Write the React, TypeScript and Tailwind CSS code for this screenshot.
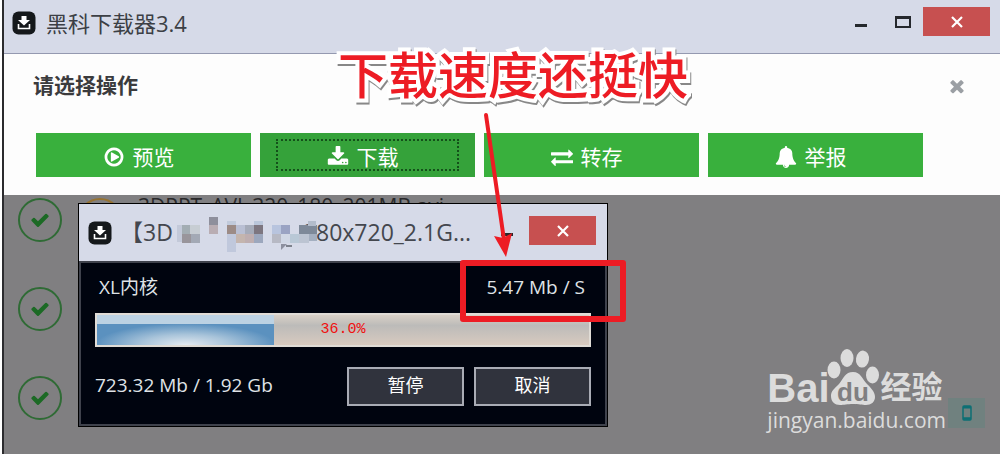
import React from 'react';

const ICONS = {
  play: 'M1312 896q0 37-32 55l-544 320q-15 9-32 9-16 0-32-8-32-19-32-56v-640q0-37 32-56 33-18 64 1l544 320q32 18 32 55zm128 0q0-148-73-273t-198-198-273-73-273 73-198 198-73 273 73 273 198 198 273 73 273-73 198-198 73-273zm224 0q0 209-103 385.5t-279.5 279.5-385.5 103-385.5-103-279.5-279.5-103-385.5 103-385.5 279.5-279.5 385.5-103 385.5 103 279.5 279.5 103 385.5z',
  download: 'M1344 1344q0-26-19-45t-45-19-45 19-19 45 19 45 45 19 45-19 19-45zm256 0q0-26-19-45t-45-19-45 19-19 45 19 45 45 19 45-19 19-45zm128-224v320q0 40-28 68t-68 28h-1472q-40 0-68-28t-28-68v-320q0-40 28-68t68-28h465l135 136q58 56 136 56t136-56l136-136h464q40 0 68 28t28 68zm-325-569q17 41-14 70l-448 448q-18 19-45 19t-45-19l-448-448q-31-29-14-70 17-39 59-39h256v-448q0-26 19-45t45-19h256q26 0 45 19t19 45v448h256q42 0 59 39z',
  exchange: 'M1792 1184v192q0 13-9.5 22.5t-22.5 9.5h-1376v192q0 13-9.5 22.5t-22.5 9.5q-12 0-24-10l-319-320q-9-9-9-22 0-14 9-23l320-320q9-9 23-9 13 0 22.5 9.5t9.5 22.5v192h1376q13 0 22.5 9.5t9.5 22.5zm0-544q0 14-9 23l-320 320q-9 9-23 9-13 0-22.5-9.5t-9.5-22.5v-192h-1376q-13 0-22.5-9.5t-9.5-22.5v-192q0-13 9.5-22.5t22.5-9.5h1376v-192q0-14 9-23t23-9q12 0 24 10l319 319q9 9 9 23z',
  bell: 'M912 1696q0-16-16-16-59 0-101.5-42.5t-42.5-101.5q0-16-16-16t-16 16q0 73 51.5 124.5t124.5 51.5q16 0 16-16zm816-288q0 52-38 90t-90 38h-448q0 106-75 181t-181 75-181-75-75-181h-448q-52 0-90-38t-38-90q50-42 91-88t85-119.5 74.5-158.5 50-206 19.5-260q0-152 117-282.5t307-158.5q-8-19-8-39 0-40 28-68t68-28 68 28 28 68q0 20-8 39 190 28 307 158.5t117 282.5q0 139 19.5 260t50 206 74.5 158.5 85 119.5 91 88z',
  times: 'M1490 1322q0 40-28 68l-136 136q-28 28-68 28t-68-28l-294-294-294 294q-28 28-68 28t-68-28l-136-136q-28-28-28-68t28-68l294-294-294-294q-28-28-28-68t28-68l136-136q28-28 68-28t68 28l294 294 294-294q28-28 68-28t68 28l136 136q28 28 28 68t-28 68l-294 294 294 294q28 28 28 68z',
  check: 'M1671 566q0 40-28 68l-724 724-136 136q-28 28-68 28t-68-28l-136-136-362-362q-28-28-28-68t28-68l136-136q28-28 68-28t68 28l294 295 656-657q28-28 68-28t68 28l136 136q28 28 28 68z',
};

const Icon = ({ name, className }: { name: keyof typeof ICONS; className: string }) => (
  <svg viewBox="0 0 1792 1792" fill="currentColor" className={className} aria-hidden="true">
    <path d={ICONS[name]} />
  </svg>
);

const AppIcon = () => (
  <svg viewBox="0 0 24 24" className="size-6 shrink-0" aria-hidden="true">
    <rect x="0.5" y="0.5" width="23" height="23" rx="6" fill="#15181b" />
    <path d="M9.5 5h5v4h3.500L12 14.500 6 9h3.500z" fill="#fff" />
    <path d="M6.500 13v4.500h11V13" fill="none" stroke="#fff" strokeWidth="1.6" />
  </svg>
);

const CloseButton = () => (
  <button type="button" aria-label="关闭" className="flex h-[29px] w-[67px] items-center justify-center bg-[#c75050]">
    <svg viewBox="0 0 12 12" className="size-3">
      <path d="M1 1l10 10M11 1L1 11" stroke="#fff" strokeWidth="2.2" />
    </svg>
  </button>
);

// Pixelated part of the file name: x, y, w, h, color
const MOSAIC: [number, number, number, number, string][] = [
  [0, 14, 6, 17, '#c3c9d9'],
  [5, 14, 8, 9, '#a3adb3'],
  [13, 14, 10, 9, '#c7cdd3'],
  [5, 23, 9, 9, '#99959b'],
  [14, 23, 9, 9, '#a3a9b5'],
  [32, 6, 9, 9, '#8e8f9c'],
  [32, 14, 9, 9, '#b9adb3'],
  [50, 10, 9, 5, '#c1cadb'],
  [50, 14, 9, 9, '#9c8b86'],
  [59, 14, 9, 9, '#b9bfd3'],
  [68, 14, 9, 9, '#a5abb9'],
  [77, 10, 9, 5, '#bac6da'],
  [77, 14, 9, 9, '#7d7680'],
  [50, 23, 9, 18, '#c0c8dc'],
  [59, 23, 9, 9, '#c4b5ae'],
  [68, 23, 9, 9, '#beaeb0'],
  [77, 23, 9, 9, '#9ca7bd'],
  [95, 14, 9, 9, '#b8c4de'],
  [104, 14, 9, 9, '#9aa3c3'],
  [95, 23, 9, 9, '#b7b9c4'],
  [104, 23, 9, 9, '#d0d7e5'],
  [113, 23, 9, 9, '#b9c8d6'],
  [122, 14, 18, 9, '#7e8999'],
  [122, 23, 10, 9, '#bcc4d2'],
  [132, 23, 8, 7, '#a4afc0'],
  [131, 10, 8, 5, '#b3bccb'],
];

const actions = [
  { label: '预览', icon: 'play', focused: false },
  { label: '下载', icon: 'download', focused: true },
  { label: '转存', icon: 'exchange', focused: false },
  { label: '举报', icon: 'bell', focused: false },
] as const;

const files = ['3DPPT_AVI_320_180_201MB.avi', '', ''];

const DownloadDialog = ({ percent }: { percent: number }) => (
  <section className="absolute left-[78px] top-[203px] w-[530px] border border-black bg-[#00040f] text-[#dfe2e6]">
    <div className="flex h-[57px] items-center bg-[#d6dae8] pl-[9px] pr-[11px] text-[#44474e]">
      <AppIcon />
      <h2 className="ml-2 flex flex-1 items-center whitespace-nowrap text-[23px] leading-none">
        <span>【3D</span>
        <svg viewBox="0 0 140 44" className="relative -mr-[14px] ml-1 h-11 w-[140px] shrink-0" aria-hidden="true">
          {MOSAIC.map(([x, y, w, h, color]) => (
            <rect key={`${x}-${y}`} x={x} y={y} width={w} height={h} fill={color} />
          ))}
          <path d="M104 33l6 0-6 6z" fill="#8d909f" />
          <path d="M109 35h6" stroke="#61656f" strokeWidth="1.5" />
        </svg>
        <span>280x720_2.1G...</span>
      </h2>
      <button type="button" aria-label="最小化" className="mr-4 flex h-6 w-3 items-center">
        <span className="mt-1 h-[3px] w-3 bg-[#25282d]" />
      </button>
      <div className="mb-1">
        <CloseButton />
      </div>
    </div>

    <div className="border-2 border-[#3f424c] px-[14px] pb-[18px] pt-[10px] text-[19px]">
      <div className="flex items-center justify-between pl-1 pr-[6px] leading-7">
        <span>XL内核</span>
        <span>5.47 Mb / S</span>
      </div>
      <div
        role="progressbar"
        aria-label="下载进度"
        aria-valuenow={percent}
        className="relative mt-3 h-[34px] border-2 border-[#e0dcd6] bg-linear-to-b from-[#d9d0c6] via-[#bcbbb9] via-35% to-[#d8cabf]"
      >
        <div
          className="h-full border-t-[9px] border-[#bcd2e3] bg-[radial-gradient(ellipse_at_bottom,#e4eaf0_0%,#a9c4da_35%,#5b91bf_72%)]"
          style={{ width: `${percent}%` }}
        />
        <span className="absolute inset-0 flex items-center justify-center font-['Liberation_Mono',monospace] text-[15px] text-[#f01010]">
          {percent.toFixed(1)}%
        </span>
      </div>
      <div className="mt-5 flex items-center gap-[10px]">
        <span className="flex-1 pb-1 leading-8">723.32 Mb / 1.92 Gb</span>
        {['暂停', '取消'].map((label) => (
          <button key={label} type="button" className="h-[39px] w-[117px] border-2 border-[#a9acb5] bg-[#30333d] pb-[3px] text-[18px] leading-none text-white">
            {label}
          </button>
        ))}
      </div>
    </div>
  </section>
);

const Watermark = () => (
  <div className="absolute bottom-[20px] right-[54px] text-[#dcdcdc]">
    <div className="flex items-end">
      <span className="font-['Liberation_Sans',sans-serif] text-[40px] font-bold leading-9">Bai</span>
      <svg viewBox="0 0 52 58" className="-ml-[3px] mr-[2px] h-[58px] w-[52px]" aria-hidden="true">
        <g fill="currentColor">
          <ellipse cx="7" cy="22" rx="6.5" ry="8.5" />
          <ellipse cx="20" cy="10" rx="6.5" ry="9" />
          <ellipse cx="35.5" cy="11" rx="6.5" ry="8.5" transform="rotate(8 35 11)" />
          <ellipse cx="45.5" cy="27" rx="6.5" ry="8.5" />
          <path d="M26 24c8 0 9 7 14 12 6 6 8 9 8 13 0 5-4 8-9 8-4 0-7-1-13-1s-9 1-13 1c-5 0-9-3-9-9 0-5 3-7 8-12 5-6 6-12 14-12z" />
        </g>
        <text x="10" y="53" fill="#807f81" fontSize="26" fontWeight="700" fontFamily="Liberation Sans, sans-serif">
          du
        </text>
      </svg>
      <span className="text-[31px] font-bold leading-10">经验</span>
    </div>
    <a href="#" className="block text-[21px] leading-7">
      jingyan.baidu.com
    </a>
  </div>
);

const App: React.FC = () => {
  return (
    <div className="relative flex min-h-screen flex-col overflow-hidden bg-white pl-[2px] font-['Open_Sans','Noto_Sans_CJK_SC',sans-serif]">
      <div className="flex flex-1 flex-col border-l-2 border-[#2b2b2e]">
        {/* Title bar */}
        <header className="flex h-[54px] items-start border-b border-[#9499b0] bg-[#d6dae8] pl-2 pr-[10px] pt-[7px] text-[#3c3f45]">
          <div className="flex h-8 flex-1 items-center gap-[10px]">
            <AppIcon />
            <h1 className="text-[22px] leading-none">黑科下载器3.4</h1>
          </div>
          <button type="button" aria-label="最小化" className="mr-7 flex h-8 w-3 items-center">
            <span className="mt-1 h-[3px] w-3 bg-[#25282d]" />
          </button>
          <button type="button" aria-label="最大化" className="mr-3 flex h-[30px] items-center">
            <span className="h-3 w-4 border-2 border-t-[3px] border-[#25282d]" />
          </button>
          <CloseButton />
        </header>

        {/* Actions */}
        <section className="bg-[#fdfdfd] pb-[18px] pl-8 pr-[77px]">
          <div className="-ml-[3px] -mr-11 flex h-[79px] items-center justify-between pb-4">
            <h2 className="text-[21px] font-bold leading-none text-[#3b3b3d]">请选择操作</h2>
            <button type="button" aria-label="取消操作">
              <Icon name="times" className="size-5 text-[#9b9fa4]" />
            </button>
          </div>
          <div className="grid grid-cols-4 gap-[9px]">
            {actions.map((action) => (
              <button
                key={action.label}
                type="button"
                className={`flex h-11 px-4 py-[6px] text-[21px] leading-none text-white ${action.focused ? 'bg-[#35a23a]' : 'bg-[#39b03d]'}`}
              >
                <span
                  className={`flex h-full flex-1 items-center justify-center gap-2 border-2 pr-[10px] pt-1 ${
                    action.focused ? 'border-dotted border-[#14501a]' : 'border-transparent'
                  }`}
                >
                  <Icon name={action.icon} className="size-[22px]" />
                  {action.label}
                </span>
              </button>
            ))}
          </div>
        </section>

        {/* File list behind the dialog */}
        <ul className="flex flex-1 flex-col gap-[45px] bg-[#807f81] pl-[14px] pt-[3px]">
          {files.map((file, i) => (
            <li key={i} className="flex h-11">
              <span className="flex size-11 items-center justify-center rounded-full border-2 border-[#2f6b35]">
                <Icon name="check" className="size-5 text-[#1c6a25]" />
              </span>
              <span className="ml-4 size-11 rounded-full border-2 border-[#967332]" />
              {file && <span className="ml-4 h-4 overflow-hidden text-[21px] leading-4 text-[#2a2a2c]">{file}</span>}
            </li>
          ))}
        </ul>
      </div>

      <DownloadDialog percent={36} />

      <Watermark />
      <button type="button" aria-label="手机" className="absolute bottom-[26px] right-[15px] flex h-[30px] w-[37px] items-center justify-center bg-[#70817f]">
        <svg viewBox="0 0 10 16" className="h-4 w-[10px]">
          <rect x="1" y="1" width="8" height="14" rx="1" fill="none" stroke="#0d6f74" strokeWidth="1.5" />
          <path d="M1 2.2h8M1 13.5h8" stroke="#0d6f74" strokeWidth="2.4" />
        </svg>
      </button>

      {/* Callout */}
      <p className="absolute left-[338px] top-[45px] whitespace-nowrap text-[50px] font-medium leading-[60px] text-[#ed1c24] drop-shadow-[1px_2px_0px_#888] [-webkit-text-stroke:8px_white] [paint-order:stroke] [stroke-linejoin:round]">
        下载速度还挺快
      </p>
      <svg viewBox="0 0 30 150" className="absolute left-[482px] top-[110px] h-[150px] w-[30px]" aria-hidden="true">
        <path d="M4 5L22 130" stroke="#ed1c24" strokeWidth="4" strokeLinecap="round" />
        <path d="M24 147L12 126l9 2 9-5z" fill="#ed1c24" />
      </svg>
      <div className="absolute left-[460px] top-[260px] h-[62px] w-[166px] rounded-[3px] border-[6px] border-[#ed1c24]" />
    </div>
  );
};

export default App;
